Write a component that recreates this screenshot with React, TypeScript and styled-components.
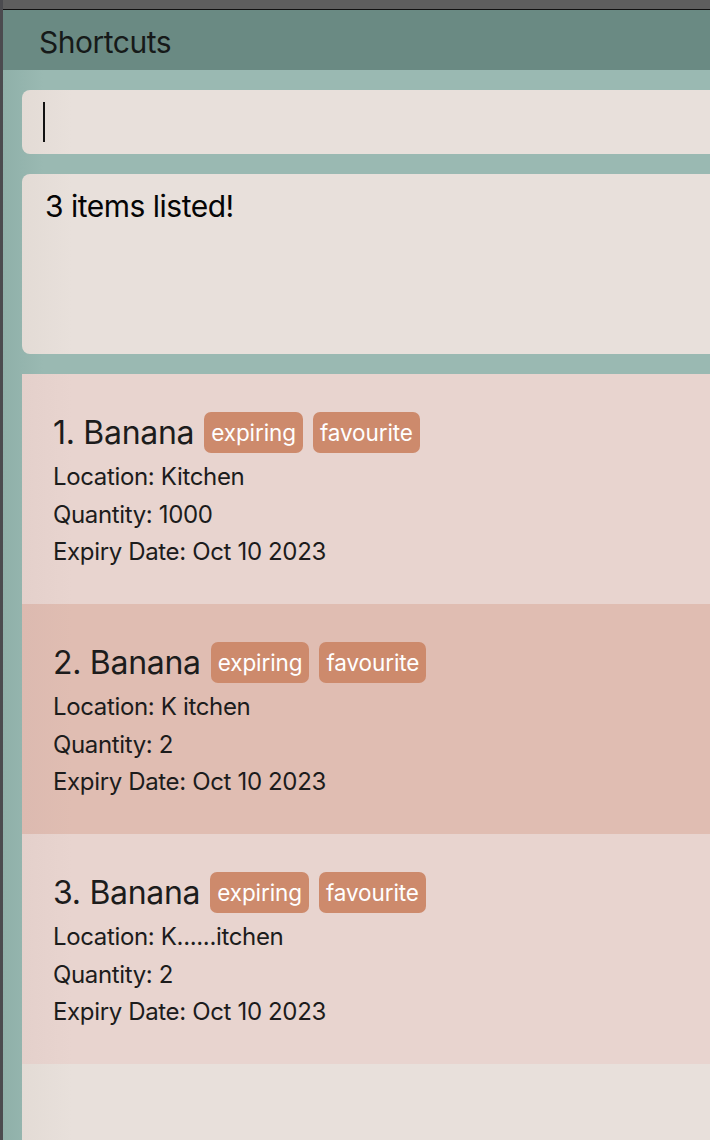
import React from "react";
import styled, { createGlobalStyle } from "styled-components";

const GlobalStyle = createGlobalStyle`
  html, body {
    margin: 0;
    padding: 0;
    background: #4b4b4f;
    overflow: hidden;
  }
  * { box-sizing: border-box; }
`;

const Shell = styled.div`
  min-height: 100vh;
  display: flex;
  flex-direction: column;
  border-left: 3px solid #4b4b4f;
  font-family: Inter, "Noto Sans", sans-serif;
  overflow: hidden;
`;

const TitleBar = styled.div`
  height: 10px;
  background: #5e5e5e;
  border-bottom: 1px solid #111;
  margin-left: -3px;
`;

const Header = styled.header`
  height: 60px;
  background: #6a8a83;
  display: flex;
  align-items: center;
  padding: 3px 0 0 36px;
  font-size: 30px;
  color: #161a19;
  letter-spacing: -0.5px;
`;

const Content = styled.main`
  flex: 1;
  display: flex;
  flex-direction: column;
  gap: 20px;
  padding: 20px 0 0 19px;
  margin-right: -12px;
  background: linear-gradient(to right, #8fb0a9 0px, #9ab9b2 40px);
`;

const Panel = styled.div`
  border-radius: 8px 0 0 8px;
  background: linear-gradient(to right, #e3dbd5 0px, #e8e0db 50px);
`;

const CommandBox = styled(Panel)`
  height: 64px;
  display: flex;
  align-items: center;
  padding-left: 21px;
`;

const Caret = styled.span`
  width: 2px;
  height: 40px;
  background: #111;
`;

const ResultBox = styled(Panel)`
  height: 180px;
  padding: 14px 23px;
  font-size: 30px;
  line-height: 36px;
  color: #050505;
  letter-spacing: -0.5px;
`;

const List = styled.section`
  flex: 1;
  display: flex;
  flex-direction: column;
  background: linear-gradient(to right, #e3dbd5 0px, #e8e0db 50px);
`;

const Card = styled.article<{ $alt: boolean }>`
  height: 230px;
  padding: 38px 0 0 31px;
  background: ${(p) =>
    p.$alt
      ? "linear-gradient(to right, #dcbab0 0px, #e0bdb2 50px)"
      : "linear-gradient(to right, #e4d0cb 0px, #e8d4cf 50px)"};
  color: #1c1c1c;
`;

const TitleRow = styled.div`
  display: flex;
  align-items: center;
  gap: 10px;
  height: 41px;
`;

const Name = styled.span`
  font-size: 32px;
  line-height: 41px;
  letter-spacing: -0.3px;
`;

const Tag = styled.span`
  height: 41px;
  display: flex;
  align-items: center;
  padding: 0 7px;
  border-radius: 7px;
  background: #cd8a6c;
  color: #fff;
  font-size: 22.5px;
  letter-spacing: -0.1px;
`;

const Details = styled.div`
  margin-top: 5px;
  font-size: 24px;
  line-height: 37.5px;
  letter-spacing: -0.35px;
`;

const items = [
  { name: "Banana", location: "Kitchen", quantity: "1000", expiry: "Oct 10 2023" },
  { name: "Banana", location: "K itchen", quantity: "2", expiry: "Oct 10 2023" },
  { name: "Banana", location: "K......itchen", quantity: "2", expiry: "Oct 10 2023" },
];

export default function App() {
  return (
    <>
      <GlobalStyle />
      <Shell>
        <TitleBar />
        <Header>Shortcuts</Header>
        <Content>
          <CommandBox>
            <Caret />
          </CommandBox>
          <ResultBox>3 items listed!</ResultBox>
          <List>
            {items.map((it, i) => (
              <Card key={i} $alt={i % 2 === 1}>
                <TitleRow>
                  <Name>
                    {i + 1}. {it.name}
                  </Name>
                  <Tag>expiring</Tag>
                  <Tag>favourite</Tag>
                </TitleRow>
                <Details>
                  <div>Location: {it.location}</div>
                  <div>Quantity: {it.quantity}</div>
                  <div>Expiry Date: {it.expiry}</div>
                </Details>
              </Card>
            ))}
          </List>
        </Content>
      </Shell>
    </>
  );
}
